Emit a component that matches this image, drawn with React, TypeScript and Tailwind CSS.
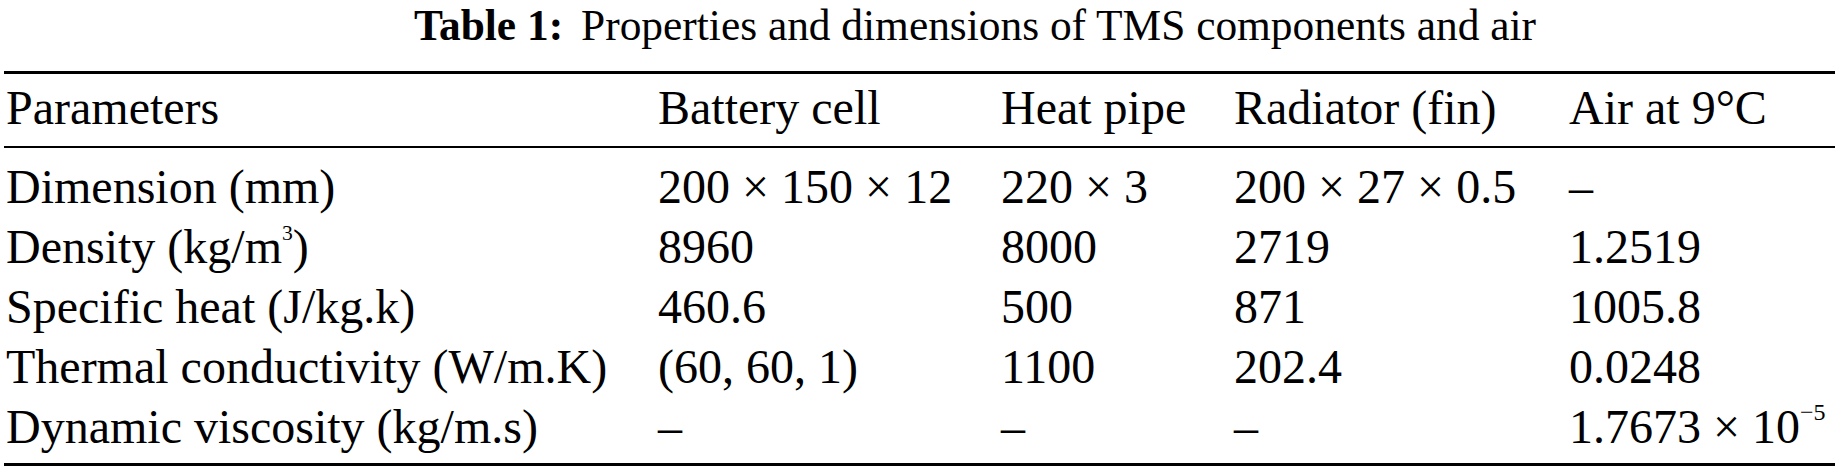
import React from "react";

const rows: { label: React.ReactNode; cells: React.ReactNode[] }[] = [
  { label: "Dimension (mm)", cells: ["200 × 150 × 12", "220 × 3", "200 × 27 × 0.5", "–"] },
  {
    label: (
      <>
        Density (kg/m<sup className="text-[0.45em] relative -top-[1.05em] align-baseline">3</sup>)
      </>
    ),
    cells: ["8960", "8000", "2719", "1.2519"],
  },
  { label: "Specific heat (J/kg.k)", cells: ["460.6", "500", "871", "1005.8"] },
  { label: "Thermal conductivity (W/m.K)", cells: ["(60, 60, 1)", "1100", "202.4", "0.0248"] },
  {
    label: "Dynamic viscosity (kg/m.s)",
    cells: [
      "–",
      "–",
      "–",
      <>
        1.7673 × 10<sup className="text-[0.5em] relative -top-[0.95em] align-baseline">−5</sup>
      </>,
    ],
  },
];

const cols = "grid grid-cols-[654px_343px_233px_335px_266px]";

export default function App() {
  return (
    <div className="w-[1837px] h-[475px] bg-white text-black font-['Liberation_Serif','Times_New_Roman',serif]">
      <div className="pl-[414px] pt-[2px] h-[71px] text-[43.4px] leading-[46px] whitespace-nowrap">
        <span className="font-bold">Table 1:</span>
        <span className="ml-[18px]">Properties and dimensions of TMS components and air</span>
      </div>
      <div className="ml-[4px] w-[1831px] border-t-[3px] border-b-[3px] border-black text-[48px] leading-[60px] whitespace-nowrap">
        <div className={`${cols} pt-[4px] pb-[8px] border-b-[2px] border-black`}>
          <div className="pl-[2px]">Parameters</div>
          <div>Battery cell</div>
          <div>Heat pipe</div>
          <div>Radiator (fin)</div>
          <div>Air at 9°C</div>
        </div>
        <div className="pt-[9px] pb-[6px]">
          {rows.map((r, i) => (
            <div key={i} className={cols}>
              <div className="pl-[2px]">{r.label}</div>
              {r.cells.map((c, j) => (
                <div key={j}>{c}</div>
              ))}
            </div>
          ))}
        </div>
      </div>
    </div>
  );
}
